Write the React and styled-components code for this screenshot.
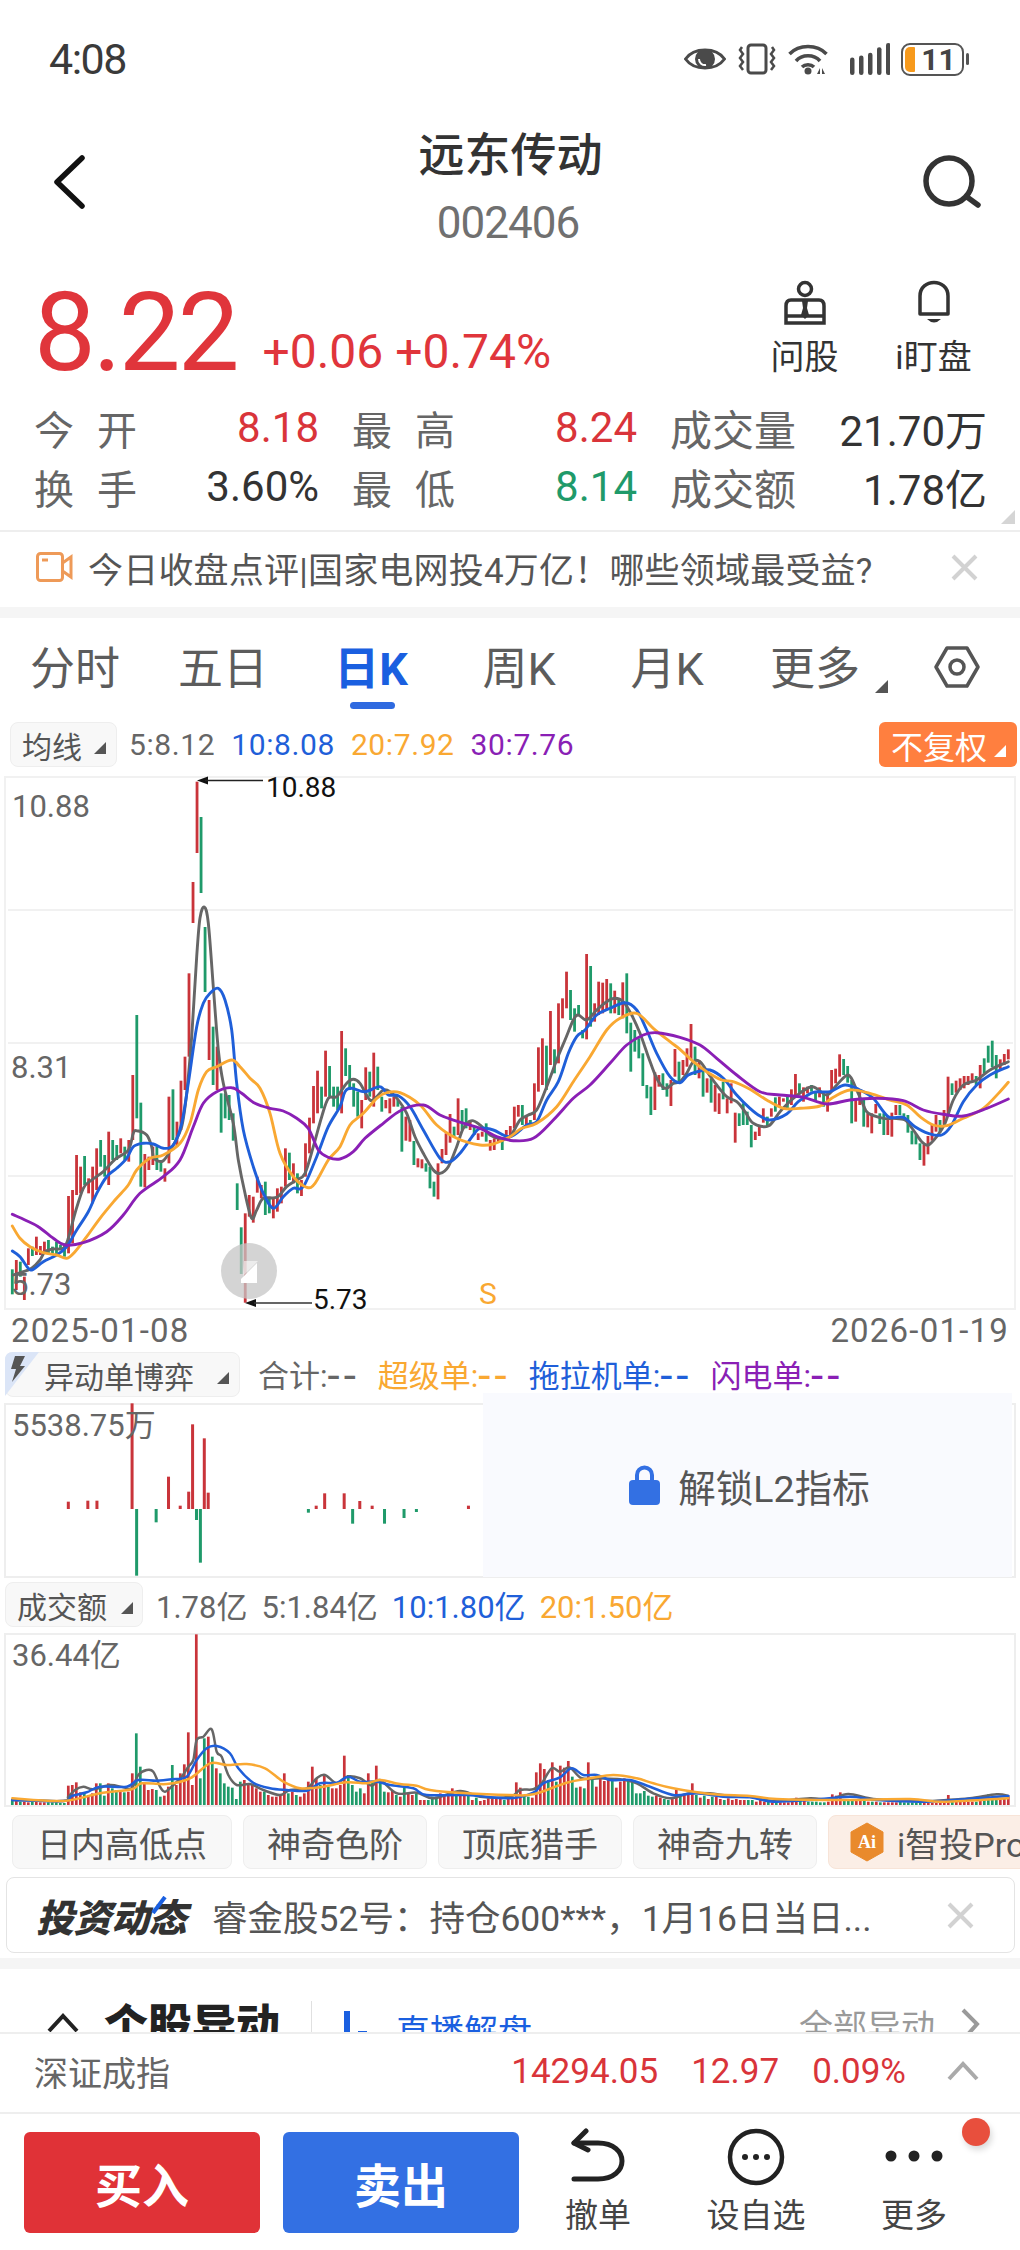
import React from 'react'
import styled, { createGlobalStyle } from 'styled-components'

const RED = '#c9343a'
const GREEN = '#1f9a6a'
const GREY = '#666666'
const BLUE = '#1f5fd9'
const ORANGE = '#f9a832'
const PURPLE = '#8a1fb5'

// candle data, read off the chart as: colour, top, bottom (3x px from the y origin)
const parseBars = (oy, s) =>
  s.trim().split(/\s+/).map((b) => {
    const [t, v] = b.slice(1).split(',').map(Number)
    return { up: b[0] === 'r', top: oy + t / 3, bottom: oy + v / 3 }
  })

const candles = [
  ...parseBars(950, `g958,1033 r930,1020 g935,980 r980,1050 r895,945 g890,918 r860,915 r888,915 r875,905 g870,910 g890,910 g875,912 g885,900 g880,920
  r738,910 r720,880 r615,735 r650,730 g618,705 r685,730 r650,760 r595,720 g570,650 g615,680 r545,705 g570,630 g585,630 r565,610 g590,630 r570,635
  r375,570 g195,505 g458,710 r612,712 r620,660 r590,645 g590,660 g630,665 r655,695 r440,640 g418,570 r515,590 r392,540 r320,420 r70,320 r-204,-81
  r-505,-291 g-399,-171 g-69,126 r150,330 g230,405 r290,420 g430,548 g430,505 g435,510 g490,572 g700,780 g832,972 r790,1058 r735,800 r740,818 r680,728
  r705,745 g695,795 g745,790 r745,805 r715,785 r710,760 r595,710 g608,690 r640,700 g670,730 r690,738 r580,680 r503,610 r408,520 r362,490 g410,475
  r302,440 g348,440 g410,470 g410,480`),
  ...parseBars(950, `r243,490 g295,378 g345,420 g400,470 g425,500 r450,535 r352,450 g365,440 r308,470 g350,420 g440,485 r450,475 r445,490 r440,470 g450,470 g470,605
  r500,572 r510,575 g573,645 r625,652 r628,655 g640,665 g650,715 g695,740 r640,748 r597,640 r550,615 r492,578 g530,560 r445,555 g480,540 g475,535 r510,540
  g530,555 r550,570 r545,560 g520,575 r570,602 r565,600 r565,575 g570,600 r540,565 r528,560 r470,535 r465,500 g465,525 r500,530 g510,525 r400,510 r292,425
  r265,405 g287,420 r183,345 g298,370 r160,340 r145,205 r65,175 g120,210 g175,245 g165,195 g240,265 r12,268 g48,230 r160,215 r95,195 r98,190 r87,180 g100,190
  r122,190 g150,195 r97,205 g70,250 g218,365 g240,305 g265,325 g310,408 g405,445 g410,495 r367,480 r375,410 g370,420 g400,440 r390,468 r297,380`),
  ...parseBars(1010, `g155,215 r150,195 r115,170 r42,150 g110,195 r150,205 g178,260 r205,248 g205,278 r225,305 r250,312 g215,268 r265,310 r220,280 r308,398 g310,348 g280,345
  g305,345 g345,412 r365,390 r345,378 r295,338 g320,350 r295,320 g262,305 r260,290 r265,275 g255,295 r238,285 r192,255 g220,250 r232,275 r230,250 g225,245
  g245,270 r232,262 g245,290 r245,305 r180,240 r176,220 r133,200 g147,195 g168,218 g210,340 r270,335 r245,285 g270,350 r310,352 r310,370 r282,310 g310,342
  g310,375 r330,375 r308,380 r285,315 g285,315 g310,328 g315,368 g362,403 g372,403 g400,450 r405,467 r378,433 r345,392 r315,365 g330,368 r300,342 r200,315
  g220,255 r212,248 r205,240 r198,235 r198,225 r190,212 g198,225 r165,235 g145,190 g107,158 g92,172 g135,205 r148,178 r132,165 r118,148`),
]

const trace = (ox, oy, s) =>
  s.trim().split(/\s+/).map((p) => {
    const [x, y] = p.split(',').map(Number)
    return [ox + x / 3, oy + y / 3]
  })

// catmull-rom through the traced points
const smooth = (pts) => {
  let d = `M${pts[0][0].toFixed(1)} ${pts[0][1].toFixed(1)}`
  for (let i = 0; i < pts.length - 1; i++) {
    const p0 = pts[i - 1] || pts[i]
    const p1 = pts[i]
    const p2 = pts[i + 1]
    const p3 = pts[i + 2] || p2
    const c1 = [p1[0] + (p2[0] - p0[0]) / 6, p1[1] + (p2[1] - p0[1]) / 6]
    const c2 = [p2[0] - (p3[0] - p1[0]) / 6, p2[1] - (p3[1] - p1[1]) / 6]
    d += `C${c1[0].toFixed(1)} ${c1[1].toFixed(1)} ${c2[0].toFixed(1)} ${c2[1].toFixed(1)} ${p2[0].toFixed(1)} ${p2[1].toFixed(1)}`
  }
  return d
}

const priceLines = [
  {
    color: GREY,
    pts: [
      ...trace(0, 950, `40,975 70,965 95,955 120,930 135,905 160,897 190,895 205,865 225,790 250,715 275,690 310,665 345,628 385,600 400,550 410,542 440,555 455,590 462,625 490,632 520,585 545,530 560,430 575,260 590,20 600,-96 613,-129 625,-81 640,111 655,300 670,400 700,520 715,630 735,730 755,805 770,780 790,745 830,742 860,710 890,690 915,670 940,590 965,500 985,445 1010,440`),
      ...trace(340, 950, `20,400 40,388 60,400 90,450 110,440 130,420 150,425 175,450 200,490 225,560 250,610 280,660 300,670 325,650 350,590 370,535 395,512 420,525 450,555 480,565 510,560 540,510 565,495 590,480 620,410 650,330 675,270 700,210 715,195 740,210 770,180 800,155 825,145 850,155 875,195 900,250 925,320 950,385 975,415 1000,400`),
      ...trace(680, 1010, `0,215 20,190 40,155 60,155 85,190 110,225 140,260 170,275 195,305 220,340 265,348 300,305 340,265 395,230 440,255 470,225 505,195 530,240 550,285 565,310 610,325 640,325 675,330 700,360 725,395 745,405 770,380 795,340 820,270 850,225 890,210 930,180 985,155`),
    ],
  },
  {
    color: BLUE,
    pts: [
      ...trace(0, 950, `37,903 60,920 85,955 100,958 130,935 170,915 200,890 230,840 265,785 290,730 320,680 350,655 380,625 400,590 430,580 460,582 490,595 520,585 545,520 565,400 590,230 610,160 630,130 655,115 675,150 695,240 710,400 730,540 760,650 790,730 820,775 850,740 880,715 910,710 950,620 985,530`),
      ...trace(340, 950, `0,470 15,425 35,415 75,425 120,410 145,435 175,437 210,470 250,540 300,625 330,635 360,610 400,555 420,535 460,540 510,560 560,525 590,515 620,450 655,395 685,310 710,260 735,240 770,195 810,175 855,158 890,180 920,240 950,310 990,380`),
      ...trace(680, 1010, `0,218 25,195 60,183 90,180 130,205 170,255 210,295 240,318 270,330 320,312 355,275 400,247 450,245 495,225 540,240 580,265 625,320 670,322 705,350 745,370 785,375 815,345 850,275 890,225 930,195 985,170`),
    ],
  },
  {
    color: ORANGE,
    pts: [
      ...trace(0, 950, `37,828 60,865 90,890 130,908 170,915 200,925 225,905 260,860 300,805 345,750 385,705 410,660 450,625 490,615 540,580 570,520 595,420 620,365 650,350 695,330 720,350 750,385 780,415 810,490 840,610 880,680 920,712 945,700 985,630`),
      ...trace(340, 950, `0,590 30,525 70,490 110,445 140,428 180,428 240,465 290,525 350,565 420,585 460,582 510,560 545,535 590,520 650,470 700,395 750,320 800,240 840,205 890,190 940,235 990,275`),
      ...trace(680, 1010, `0,118 40,155 80,185 125,210 160,215 210,238 260,270 310,295 360,295 420,288 460,262 510,240 570,250 630,270 680,285 720,320 760,345 800,347 850,325 910,295 960,245 985,217`),
    ],
  },
  {
    color: PURPLE,
    pts: [
      ...trace(0, 950, `37,793 75,810 115,830 160,865 195,885 250,878 320,845 370,795 420,730 490,680 540,630 580,530 610,460 650,425 695,413 725,430 765,460 810,475 850,483 890,505 925,535 955,600 985,622`),
      ...trace(340, 950, `0,627 40,605 75,565 130,520 185,480 250,465 300,495 345,512 420,535 470,560 520,572 580,565 640,510 700,445 750,405 810,340 860,285 910,255 950,248`),
      ...trace(680, 1010, `0,82 60,105 110,145 170,195 240,245 300,255 370,262 440,282 510,270 590,265 670,272 730,300 790,313 850,318 920,295 985,267`),
    ],
  },
]

const volumes = `g15 r12 g10 r10 r8 g10 r10 r8 r8 g8 g8 g8 g6 g6 r58 r60 r68 r38 g38 r30 r35 r65 g65 g28 r65 g50 g45 r40 g38 r40 r95 g215 g115 r65 r45 r48 g45 g25 r28 r55 g120 r60 r95 r122 r218 r60 r512 g80 g200 r205 g145 r110 g95 g65 g55 g52 g18 g70 r75 r65 r60 r50 r40 g40 r30 r25 r25 r30 r95 g35 r40 g30 r25 r35 r70 r115 r80 g60 r90 g55 r50 r50 r60 r148 g90 g60 g40 g50 r35 r95 g70 r118 g75 g40 r38 r42 g30 r25 g55 r35 r30 g35 r15 r15 g15 g25 g25 r35 r30 r30 r50 g30 r35 r30 g28 r15 g22 r12 r15 r20 r20 r20 r20 g15 r18
r25 r68 r52 g28 g25 r22 r98 r125 r108 g75 r128 g70 r118 r112 r132 g85 g52 r55 g50 r128 g75 r55 r90 r72 r75 g75 r52 r70 r80 g75 g70 g35 g35 g42 g28 g25 r28 r22 g18 g15 r20 r45 g25 r30 r30 r65 g30 r22 g28 r18 g25 r25 r18 g15 r20 r15 r18 r15 r15 g15 g15 r10 r15 r10 g10 r8 g10 r8 r8 r8 r10 r22 g12 r12 g10 g10 g10 g8 g8 r10 r32 r28 r38 g18 g15 g15 r12 r14 g16 r10 g10 r10 g8 r8 r8 r8 r8 g10 g8 g8 g8 g8 g8 r6 r6 r6 r6 r6 r6 r30 g10 r10 r12 r10 r10 r10 g10 r25 g18 g32 g20 g18 r15 r18 r25`
  .trim().split(/\s+/).map((b) => ({ up: b[0] === 'r', h: Number(b.slice(1)) / 3 }))

const volumeLines = [
  {
    color: GREY,
    pts: [
      ...trace(0, 1620, `37,540 190,543 205,530 225,510 250,500 280,508 330,495 370,502 395,505 415,465 440,450 460,455 480,500 495,515 520,495 545,470 565,440 580,420 590,360 610,350 635,328 650,395 665,410 685,465 710,495 750,492 790,510 840,525 870,510 920,505 950,475 975,465 1010,490 1040,470 1080,475 1115,497 1140,480 1190,520 1250,518 1300,535 1380,513 1440,530`),
      ...trace(510, 1620, `0,530 30,510 70,508 95,490 125,445 150,455 180,443 215,475 270,475 330,478 380,490 430,520 480,535 540,520 600,520 660,528 720,530 790,543 900,535 960,538 1015,522 1100,538 1240,543 1310,540 1380,535 1460,523 1495,528`),
    ],
  },
  {
    color: BLUE,
    pts: [
      ...trace(0, 1620, `37,540 190,543 215,528 260,517 300,500 380,500 415,480 470,482 515,478 560,470 590,420 620,385 650,378 690,400 715,445 760,488 810,505 860,510 920,512 960,490 1010,488 1045,470 1080,485 1130,485 1170,495 1240,505 1280,525 1400,525`),
      ...trace(510, 1620, `0,535 70,518 100,490 150,472 185,445 220,465 260,465 300,480 360,480 420,500 490,525 560,520 640,530 720,532 790,545 900,540 1020,530 1100,540 1240,545 1400,535 1495,528`),
    ],
  },
  {
    color: ORANGE,
    pts: [
      ...trace(0, 1620, `37,535 190,543 300,520 395,508 425,490 500,492 570,475 630,430 680,435 740,432 795,445 850,485 900,505 960,502 1040,487 1100,490 1140,480 1200,492 1250,497 1290,510 1400,520`),
      ...trace(510, 1620, `0,525 70,523 170,488 240,475 310,465 380,475 430,490 490,505 600,522 720,528 800,537 1000,540 1200,537 1300,545 1495,535`),
    ],
  },
]

const flowBars = [
  [105, 485, 507], [135, 482, 507], [149, 482, 507], [203, 190, 507], [259, 410, 507], [277, 497, 507], [290, 455, 507],
  [296, 253, 507], [314, 295, 507], [320, 458, 507], [486, 497, 507], [499, 460, 507], [529, 460, 507], [553, 483, 507],
  [572, 497, 507], [720, 497, 507], [210, 507, 707], [240, 507, 547], [302, 507, 540], [308, 507, 668], [474, 507, 518],
  [542, 507, 551], [591, 507, 551], [621, 507, 534], [640, 507, 516],
]

const barX = (i, n) => 12.3 + (996 / (n - 1)) * i

const GlobalStyle = createGlobalStyle`
  html, body { margin: 0; padding: 0; background: #fff; }
  body { font-family: Roboto, "Noto Sans CJK SC", sans-serif; color: #333; }
  * { box-sizing: border-box; }
`

const Page = styled.div`
  width: 1020px;
  height: 2250px;
  overflow: hidden;
  background: #fff;
  display: flex;
  flex-direction: column;
`

const StatusBar = styled.div`
  height: 120px;
  flex: none;
  display: flex;
  align-items: center;
  justify-content: space-between;
  padding: 0 56px 2px 49px;
  font-size: 43px;
  letter-spacing: -1.5px;
  color: #3a3a3a;
`
const StatusIcons = styled.div`
  display: flex;
  align-items: center;
  letter-spacing: 0;
`
const Battery = styled.div`
  position: relative;
  width: 63px;
  height: 33px;
  margin-left: 11px;
  border: 2.5px solid #555;
  border-radius: 9px;
  display: flex;
  align-items: center;
  justify-content: center;
  font-size: 30px;
  font-weight: 700;
  color: #444;
  padding-left: 12px;
  &::before {
    content: '';
    position: absolute;
    left: 2px;
    top: 2px;
    bottom: 2px;
    width: 10px;
    background: #f79a1c;
    border-radius: 5px 1px 1px 5px;
  }
  &::after {
    content: '';
    position: absolute;
    right: -7px;
    top: 8px;
    width: 3px;
    height: 12px;
    background: #555;
    border-radius: 2px;
  }
`

const Header = styled.div`
  height: 150px;
  flex: none;
  display: flex;
  align-items: flex-start;
  justify-content: space-between;
  padding: 35px 39px 0 53px;
`
const TitleBox = styled.div`
  display: flex;
  flex-direction: column;
  align-items: center;
  margin-left: 13px;
  margin-top: -33px;
`
const Title = styled.div`
  font-size: 46px;
  font-weight: 500;
  line-height: 66px;
  color: #333;
`
const Code = styled.div`
  font-size: 44px;
  letter-spacing: -1px;
  line-height: 50px;
  margin: 10px 5px 0 0;
  color: #707070;
`

const PriceRow = styled.div`
  height: 127px;
  flex: none;
  display: flex;
  justify-content: space-between;
  padding: 0 22px 0 34px;
`
const PriceLeft = styled.div`
  display: flex;
  align-items: flex-start;
  gap: 26px;
`
const Price = styled.div`
  font-size: 110px;
  line-height: 110px;
  margin-top: 8px;
  letter-spacing: -3px;
  color: #e0353b;
`
const Change = styled.div`
  font-size: 48px;
  line-height: 56px;
  margin-top: 54px;
  color: #e0353b;
  white-space: pre;
`
const Actions = styled.div`
  display: flex;
  padding-top: 10px;
`
const Action = styled.div`
  width: 129px;
  display: flex;
  flex-direction: column;
  align-items: center;
  gap: 8px;
  font-size: 34px;
  line-height: 46px;
  color: #333;
`

const Stats = styled.div`
  height: 133px;
  flex: none;
  padding: 1px 33px 0 34px;
  position: relative;
`
const StatRow = styled.div`
  display: flex;
  height: 59px;
  align-items: center;
  gap: 33px;
`
const StatCell = styled.div`
  display: flex;
  align-items: center;
  justify-content: space-between;
  width: ${(p) => p.$w}px;
`
const StatLabel = styled.div`
  display: flex;
  justify-content: space-between;
  font-size: ${(p) => (p.$long ? 42 : 40)}px;
  width: ${(p) => (p.$long ? 126 : 103)}px;
  color: #666;
`
const StatValue = styled.div`
  font-size: 42px;
  color: ${(p) => p.$color || '#333'};
`
const CornerMark = styled.div`
  position: absolute;
  right: 5px;
  bottom: 6px;
  width: 0;
  height: 0;
  border-left: 14px solid transparent;
  border-bottom: 14px solid #d5d5d5;
`

const Notice = styled.div`
  height: 77px;
  flex: none;
  border-top: 2px solid #eeeeee;
  display: flex;
  align-items: center;
  padding: 0 42px 5px 36px;
  font-size: 35px;
  color: #555;
`
const NoticeText = styled.div`
  flex: 1;
  margin-left: 15px;
  white-space: nowrap;
  letter-spacing: 0.2px;
`
const Band = styled.div`
  height: ${(p) => p.$h}px;
  flex: none;
  background: #f5f5f5;
`

const Tabs = styled.div`
  height: 94px;
  flex: none;
  display: flex;
  padding-left: 1px;
  padding-top: 11px;
`
const Tab = styled.div`
  position: relative;
  width: 148px;
  height: 72px;
  display: flex;
  align-items: center;
  justify-content: center;
  font-size: 45px;
  font-weight: ${(p) => (p.$active ? 700 : 400)};
  color: ${(p) => (p.$active ? '#1a5fe0' : '#5c5c5c')};
  ${(p) =>
    p.$active &&
    `&::after {
      content: '';
      position: absolute;
      left: 53px;
      right: 50px;
      bottom: -8px;
      height: 7px;
      border-radius: 4px;
      background: #2f6ae0;
    }`}
`
const TabCaret = styled.div`
  align-self: flex-end;
  margin: 0 0 19px -14px;
  width: 0;
  height: 0;
  border-left: 13px solid transparent;
  border-bottom: 13px solid #555;
`
const TabIcon = styled.div`
  margin: 14px 0 0 46px;
`

const LegendRow = styled.div`
  height: 64px;
  flex: none;
  padding: 10px 3px 0 10px;
  display: flex;
  align-items: flex-start;
`
const Selector = styled.div`
  position: relative;
  flex: none;
  height: 45px;
  width: ${(p) => p.$w}px;
  padding-left: ${(p) => p.$pad || 11}px;
  background: #f8f8f8;
  border: 1px solid #eee;
  border-radius: 8px;
  display: flex;
  align-items: center;
  font-size: 30px;
  color: #555;
  &::after {
    content: '';
    position: absolute;
    right: ${(p) => p.$caret || 10}px;
    bottom: 12px;
    width: 0;
    height: 0;
    border-left: 12px solid transparent;
    border-bottom: 12px solid #555;
  }
`
const LegendItems = styled.div`
  height: 45px;
  display: flex;
  align-items: center;
  gap: 16px;
  margin-left: 12px;
  font-size: 30px;
  letter-spacing: 0.6px;
  flex: 1;
`
const LegendItem = styled.span`
  color: ${(p) => p.$color || '#666'};
  white-space: nowrap;
`
const AdjustButton = styled.div`
  position: relative;
  width: 138px;
  height: 45px;
  background: #ff7f3f;
  border-radius: 6px;
  color: #fff;
  font-size: 32px;
  display: flex;
  align-items: center;
  padding-left: 12px;
  &::after {
    content: '';
    position: absolute;
    right: 11px;
    bottom: 10px;
    width: 0;
    height: 0;
    border-left: 12px solid transparent;
    border-bottom: 12px solid #fff;
  }
`

const ChartBox = styled.div`
  height: ${(p) => p.$h}px;
  flex: none;
  position: relative;
  svg { display: block; overflow: visible; }
`

const DateRow = styled.div`
  height: 40px;
  flex: none;
  display: flex;
  justify-content: space-between;
  align-items: center;
  padding: 0 11px;
  font-size: 33px;
  letter-spacing: 1.2px;
  color: #666;
`

const IndicatorRow = styled.div`
  height: ${(p) => p.$h}px;
  flex: none;
  display: flex;
  align-items: flex-start;
  padding: ${(p) => p.$top}px 0 0 5px;
`
const Flash = styled.svg`
  position: absolute;
  left: -1px;
  top: -1px;
`
const IndicatorItems = styled.div`
  height: 45px;
  display: flex;
  align-items: center;
  font-size: 31px;
  gap: ${(p) => p.$gap}px;
  margin-left: ${(p) => p.$ml}px;
`
const Dashes = styled.span`
  font-size: 44px;
  line-height: 1;
  letter-spacing: 4px;
  vertical-align: -4px;
`

const Locked = styled.div`
  position: absolute;
  left: 483px;
  right: 8px;
  top: -5px;
  bottom: 0;
  background: #f9fafe;
  display: flex;
  align-items: center;
  justify-content: center;
  gap: 18px;
  padding-left: 4px;
  font-size: 37.5px;
  color: #555;
`

const ChipRow = styled.div`
  height: 71px;
  flex: none;
  padding: 9px 0 0 12px;
  display: flex;
  gap: 11px;
  overflow: hidden;
`
const Chip = styled.div`
  flex: none;
  height: 54px;
  padding: 0 ${(p) => p.$pad || 23}px;
  display: flex;
  align-items: center;
  gap: 12px;
  font-size: 34px;
  white-space: nowrap;
  color: #555;
  border-radius: 8px;
  border: 1px solid ${(p) => (p.$hot ? '#f7e4d8' : '#eee')};
  background: ${(p) => (p.$hot ? '#fbeee6' : '#f8f8f8')};
`

const NewsCard = styled.div`
  height: 76px;
  flex: none;
  margin: 0 5px 0 6px;
  border: 1px solid #e4e4e4;
  border-radius: 8px;
  display: flex;
  align-items: center;
  padding: 0 40px 0 29px;
`
const NewsBrand = styled.div`
  position: relative;
  font-size: 38px;
  font-weight: 900;
  font-style: italic;
  color: #333;
  letter-spacing: -0.5px;
  white-space: nowrap;
`
const BrandStroke = styled.svg`
  position: absolute;
  left: 115px;
  top: 8px;
`
const NewsText = styled.div`
  flex: 1;
  margin-left: 26px;
  font-size: 35.5px;
  color: #555;
  white-space: nowrap;
`

const Peek = styled.div`
  height: 63px;
  flex: none;
  overflow: hidden;
  display: flex;
  align-items: flex-start;
  padding: 27px 40px 0 47px;
`
const PeekTitle = styled.div`
  font-size: 44px;
  font-weight: 900;
  color: #222;
  line-height: 60px;
  margin-left: 25px;
`
const PeekDivider = styled.div`
  width: 1px;
  height: 40px;
  margin: 5px 32px 0 31px;
  background: #e0e0e0;
`
const PeekLink = styled.div`
  flex: 1;
  display: flex;
  gap: 29px;
  font-size: 34px;
  line-height: 46px;
  padding-top: 13px;
  color: #1a5fe0;
`
const PeekLinkMark = styled.div`
  width: 23px;
  height: 60px;
  margin-top: 2px;
  border-left: 6px solid #1a5fe0;
  position: relative;
  &::after {
    content: '';
    position: absolute;
    left: 8px;
    top: 20px;
    width: 9px;
    height: 6px;
    background: #1a5fe0;
  }
`
const PeekMore = styled.div`
  display: flex;
  gap: 26px;
  font-size: 34px;
  line-height: 46px;
  color: #9a9a9a;
  padding-top: 8px;
`

const IndexRow = styled.div`
  height: 82px;
  flex: none;
  border-top: 2px solid #eee;
  border-bottom: 2px solid #eee;
  display: flex;
  align-items: center;
  padding: 0 41px 4px 34px;
  font-size: 34px;
  color: #666;
`
const IndexName = styled.div`
  flex: 1;
`
const IndexValue = styled.div`
  font-size: 35px;
  color: #d9343a;
  margin-right: ${(p) => p.$mr}px;
`

const TradeBar = styled.div`
  flex: 1;
  position: relative;
  display: flex;
  padding: 18px 0 0 24px;
`
const TradeButton = styled.div`
  width: 236px;
  height: 101px;
  margin-right: ${(p) => p.$mr}px;
  border-radius: 6px;
  background: ${(p) => p.$color};
  color: #fff;
  font-size: 47px;
  font-weight: 700;
  display: flex;
  align-items: center;
  justify-content: center;
`
const TradeTool = styled.div`
  width: 158px;
  height: 108px;
  margin-top: -4px;
  display: flex;
  flex-direction: column;
  align-items: center;
  justify-content: space-between;
  font-size: 33px;
  line-height: 40px;
  color: #444;
`
const RedDot = styled.div`
  position: absolute;
  left: 962px;
  top: 4px;
  width: 28px;
  height: 28px;
  border-radius: 50%;
  background: #e84f3d;
  box-shadow: 2px 4px 6px rgba(0, 0, 0, 0.15);
`

function Cross({ size = 27, color = '#d2d2d2' }) {
  return (
    <svg width={size} height={size} viewBox="0 0 27 27" fill="none" stroke={color} strokeWidth="4">
      <path d="M2 2 L25 25 M25 2 L2 25" />
    </svg>
  )
}

function StatusIconSet() {
  const bars = [[849, 25], [858, 28], [867, 32], [876, 40], [885, 46]]
  return (
    <StatusIcons>
      <svg width="42" height="26" viewBox="0 0 42 26">
        <path d="M1.5 13 C10 1 32 1 40.500 13 C32 25 10 25 1.500 13 Z" fill="none" stroke="#4a4a4a" strokeWidth="3" />
        <circle cx="21" cy="13" r="10" fill="#4a4a4a" />
        <path d="M15 13 A6 6 0 0 0 22 19" stroke="#fff" strokeWidth="2" fill="none" />
      </svg>
      <svg width="38" height="32" viewBox="0 0 38 32" style={{ marginLeft: 12 }}>
        <rect x="10" y="2" width="18" height="28" rx="3" fill="none" stroke="#4a4a4a" strokeWidth="3" />
        <path d="M4 4 l-2 3 l3 4 l-3 4 l3 4 l-3 4 l3 4" fill="none" stroke="#4a4a4a" strokeWidth="2.500" />
        <path d="M34 4 l2 3 l-3 4 l3 4 l-3 4 l3 4 l-3 4" fill="none" stroke="#4a4a4a" strokeWidth="2.500" />
      </svg>
      <svg width="42" height="32" viewBox="0 0 42 32" style={{ marginLeft: 12 }}>
        <path d="M1.500 11 C11 1 29 1 38.500 11" fill="none" stroke="#4a4a4a" strokeWidth="3.500" />
        <path d="M8 18 C14 11 26 11 32 18" fill="none" stroke="#4a4a4a" strokeWidth="3.500" />
        <path d="M14 24 C17 21 23 21 26 24" fill="none" stroke="#4a4a4a" strokeWidth="3.500" />
        <circle cx="20" cy="28" r="3.500" fill="#4a4a4a" />
        <path d="M29 31 l3 -6 v6 z M34 25 l3 6 h-3 z" fill="#4a4a4a" />
      </svg>
      <svg width="42" height="32" viewBox="0 0 42 32" style={{ marginLeft: 18 }}>
        {bars.map(([x, h]) => (
          <rect key={x} x={x - 847} y={32 - (h * 32) / 46} width="4.500" height={(h * 32) / 46} rx="2.200" fill="#4a4a4a" />
        ))}
      </svg>
      <Battery>11</Battery>
    </StatusIcons>
  )
}

function ChartLines({ lines, width }) {
  return lines.map((l) => (
    <path key={l.color} d={smooth(l.pts)} fill="none" stroke={l.color} strokeWidth={width} strokeLinejoin="round" strokeLinecap="round" />
  ))
}

function PriceChart() {
  const gridY = [910, 1043, 1176]
  return (
    <svg width="1020" height="534" viewBox="0 776 1020 534" fontFamily="Roboto, sans-serif">
      <rect x="5" y="777" width="1010" height="532" fill="none" stroke="#f1f1f1" strokeWidth="2" />
      {gridY.map((y) => (
        <line key={y} x1="8" x2="1013" y1={y} y2={y} stroke="#ececec" strokeWidth="1.500" />
      ))}
      {candles.map((c, i) => (
        <rect key={i} x={barX(i, candles.length) - 1.4} y={c.top} width="2.800" height={c.bottom - c.top} fill={c.up ? RED : GREEN} />
      ))}
      <ChartLines lines={priceLines} width={2.900} />
      <text x="12" y="817" fontSize="31" fill="#666">10.88</text>
      <text x="11" y="1078" fontSize="31" fill="#666">8.31</text>
      <text x="11" y="1295" fontSize="31" fill="#666">5.73</text>
      <path d="M197 780.500 L208 776.500 V784.500 Z" fill="#111" />
      <line x1="205" x2="263" y1="780.500" y2="780.500" stroke="#222" strokeWidth="1.500" />
      <text x="266" y="797" fontSize="28" fill="#111">10.88</text>
      <circle cx="249" cy="1271" r="28" fill="rgba(198,198,198,0.75)" />
      <path d="M241 1279 L257 1263 V1283 H241 Z" fill="#fff" />
      <path d="M244 1261 L258 1261 L243 1276 Z" fill="#fff" opacity="0.55" />
      <path d="M245 1303 L256 1299 V1307 Z" fill="#111" />
      <line x1="254" x2="312" y1="1303" y2="1303" stroke="#333" strokeWidth="1.500" />
      <text x="313" y="1309" fontSize="28" fill="#111">5.73</text>
      <text x="479" y="1304" fontSize="30" fill="#f9a832">S</text>
    </svg>
  )
}

function FlowChart() {
  return (
    <svg width="1020" height="179" viewBox="0 1398 1020 179" fontFamily="Roboto, 'Noto Sans CJK SC', sans-serif">
      <rect x="5" y="1404" width="1010" height="173" fill="none" stroke="#eeeeee" strokeWidth="2" />
      {flowBars.map(([x, top, bottom], i) => (
        <rect key={i} x={x / 1.537 - 1.500} y={1340 + top / 3} width="3" height={(bottom - top) / 3} fill={bottom === 507 ? RED : GREEN} />
      ))}
      <text x="12" y="1436" fontSize="31" fill="#666">5538.75万</text>
    </svg>
  )
}

function VolumeChart() {
  return (
    <svg width="1020" height="173" viewBox="0 1633 1020 173" fontFamily="Roboto, 'Noto Sans CJK SC', sans-serif">
      <rect x="5" y="1634" width="1010" height="172" fill="none" stroke="#eeeeee" strokeWidth="2" />
      {volumes.map((v, i) => (
        <rect key={i} x={barX(i, volumes.length) - 1.350} y={1805 - v.h} width="2.700" height={v.h} fill={v.up ? RED : GREEN} />
      ))}
      <ChartLines lines={volumeLines} width={2.500} />
      <text x="12" y="1666" fontSize="31" fill="#666">36.44亿</text>
    </svg>
  )
}

export default function App() {
  return (
    <Page>
      <GlobalStyle />
      <StatusBar>
        <span>4:08</span>
        <StatusIconSet />
      </StatusBar>

      <Header>
        <svg width="32" height="54" viewBox="0 0 32 54" fill="none" stroke="#111" strokeWidth="5.500" strokeLinecap="round" strokeLinejoin="round">
          <path d="M29 3 L4 27 L29 51" />
        </svg>
        <TitleBox>
          <Title>远东传动</Title>
          <Code>002406</Code>
        </TitleBox>
        <svg width="58" height="54" viewBox="0 0 58 54" fill="none" stroke="#333" strokeWidth="5.500" strokeLinecap="round">
          <circle cx="26" cy="26" r="23" />
          <path d="M44 42 L55 50" />
        </svg>
      </Header>

      <PriceRow>
        <PriceLeft>
          <Price>8.22</Price>
          <Change>+0.06 +0.74%</Change>
        </PriceLeft>
        <Actions>
          <Action>
            <svg width="44" height="46" viewBox="0 0 44 46" fill="none" stroke="#333" strokeWidth="3.500">
              <circle cx="22" cy="9" r="6.500" />
              <path d="M8 20 H36 Q41 20 41 26 V43 H3 V26 Q3 20 8 20 Z" />
              <path d="M3 36 H41" />
              <path d="M19 21 H25 L24 28 L26 35 L22 39 L18 35 L20 28 Z" fill="#333" stroke="none" />
            </svg>
            问股
          </Action>
          <Action>
            <svg width="36" height="46" viewBox="0 0 36 46" fill="none" stroke="#333" strokeWidth="3.500">
              <path d="M4 34 V16 C4 -2 32 -2 32 16 V34 Z" strokeLinejoin="round" />
              <path d="M11 39 Q18 46 25 39 Z" fill="#333" stroke="none" />
            </svg>
            i盯盘
          </Action>
        </Actions>
      </PriceRow>

      <Stats>
        <StatRow>
          <StatCell $w={285}>
            <StatLabel><span>今</span><span>开</span></StatLabel>
            <StatValue $color="#d9343a">8.18</StatValue>
          </StatCell>
          <StatCell $w={285}>
            <StatLabel><span>最</span><span>高</span></StatLabel>
            <StatValue $color="#d9343a">8.24</StatValue>
          </StatCell>
          <StatCell $w={317}>
            <StatLabel $long>成交量</StatLabel>
            <StatValue>21.70万</StatValue>
          </StatCell>
        </StatRow>
        <StatRow>
          <StatCell $w={285}>
            <StatLabel><span>换</span><span>手</span></StatLabel>
            <StatValue>3.60%</StatValue>
          </StatCell>
          <StatCell $w={285}>
            <StatLabel><span>最</span><span>低</span></StatLabel>
            <StatValue $color={GREEN}>8.14</StatValue>
          </StatCell>
          <StatCell $w={317}>
            <StatLabel $long>成交额</StatLabel>
            <StatValue>1.78亿</StatValue>
          </StatCell>
        </StatRow>
        <CornerMark />
      </Stats>

      <Notice>
        <svg width="37" height="30" viewBox="0 0 37 30" fill="none" stroke="#ee9a58" strokeWidth="3">
          <rect x="1.500" y="1.500" width="25" height="27" rx="3" />
          <path d="M26.500 11 L35 5 V25 L26.500 19" />
          <path d="M6 8 H12" />
        </svg>
        <NoticeText>今日收盘点评|国家电网投4万亿！哪些领域最受益?</NoticeText>
        <Cross />
      </Notice>
      <Band $h={11} />

      <Tabs>
        <Tab>分时</Tab>
        <Tab>五日</Tab>
        <Tab $active>日K</Tab>
        <Tab>周K</Tab>
        <Tab>月K</Tab>
        <Tab>更多</Tab>
        <TabCaret />
        <TabIcon>
          <svg width="46" height="48" viewBox="0 0 46 48" fill="none" stroke="#555" strokeWidth="3.500" strokeLinejoin="round">
            <path d="M13 5 H33 L44 24 L33 43 H13 L2 24 Z" />
            <circle cx="23" cy="24" r="7" />
          </svg>
        </TabIcon>
      </Tabs>

      <LegendRow>
        <Selector $w={107}>均线</Selector>
        <LegendItems>
          <LegendItem>5:8.12</LegendItem>
          <LegendItem $color={BLUE}>10:8.08</LegendItem>
          <LegendItem $color={ORANGE}>20:7.92</LegendItem>
          <LegendItem $color={PURPLE}>30:7.76</LegendItem>
        </LegendItems>
        <AdjustButton>不复权</AdjustButton>
      </LegendRow>

      <ChartBox $h={534}>
        <PriceChart />
      </ChartBox>

      <DateRow>
        <span>2025-01-08</span>
        <span>2026-01-19</span>
      </DateRow>

      <IndicatorRow $h={48} $top={2}>
        <Selector $w={235} $pad={38}>
          <Flash width="34" height="44" viewBox="0 0 34 44">
            <path d="M8 0 H34 L0 44 V8 Q0 0 8 0 Z" fill="#dbe5f7" />
            <path d="M10 4 H20 L15 14 H20 L7 30 L11 17 H6 Z" fill="#555" />
          </Flash>
          异动单博弈
        </Selector>
        <IndicatorItems $gap={18} $ml={18}>
          <LegendItem>合计:<Dashes>--</Dashes></LegendItem>
          <LegendItem $color={ORANGE}>超级单:<Dashes>--</Dashes></LegendItem>
          <LegendItem $color={BLUE}>拖拉机单:<Dashes>--</Dashes></LegendItem>
          <LegendItem $color={PURPLE}>闪电单:<Dashes>--</Dashes></LegendItem>
        </IndicatorItems>
      </IndicatorRow>

      <ChartBox $h={179}>
        <FlowChart />
        <Locked>
          <svg width="31" height="40" viewBox="0 0 31 40">
            <path d="M8 18 V10 A7.500 7.500 0 0 1 23 10 V18" fill="none" stroke="#3370e3" strokeWidth="4" />
            <rect x="0" y="15" width="31" height="25" rx="4" fill="#3370e3" />
          </svg>
          解锁L2指标
        </Locked>
      </ChartBox>

      <IndicatorRow $h={56} $top={5}>
        <Selector $w={138} $caret={9}>成交额</Selector>
        <IndicatorItems $gap={14} $ml={13}>
          <LegendItem>1.78亿</LegendItem>
          <LegendItem>5:1.84亿</LegendItem>
          <LegendItem $color={BLUE}>10:1.80亿</LegendItem>
          <LegendItem $color={ORANGE}>20:1.50亿</LegendItem>
        </IndicatorItems>
      </IndicatorRow>

      <ChartBox $h={173}>
        <VolumeChart />
      </ChartBox>

      <ChipRow>
        <Chip $pad={24}>日内高低点</Chip>
        <Chip>神奇色阶</Chip>
        <Chip>顶底猎手</Chip>
        <Chip>神奇九转</Chip>
        <Chip $hot $pad={20}>
          <svg width="36" height="40" viewBox="0 0 36 40">
            <path d="M18 1 L34 10 V30 L18 39 L2 30 V10 Z" fill="#e98a2c" stroke="#e98a2c" strokeLinejoin="round" />
            <text x="18" y="26" textAnchor="middle" fontSize="18" fontFamily="Liberation Serif, serif" fontWeight="700" fill="#fff">Ai</text>
          </svg>
          i智投Pro
        </Chip>
      </ChipRow>

      <NewsCard>
        <NewsBrand>
          投资动态
          <BrandStroke width="16" height="18" viewBox="0 0 16 18">
            <path d="M14 1 L2 17" stroke="#1a5fe0" strokeWidth="4" />
          </BrandStroke>
        </NewsBrand>
        <NewsText>睿金股52号：持仓600***，1月16日当日...</NewsText>
        <Cross />
      </NewsCard>
      <div style={{ height: 5, flex: 'none' }} />
      <Band $h={11} />

      <Peek>
        <svg width="32" height="20" viewBox="0 0 32 20" fill="none" stroke="#222" strokeWidth="4" style={{ marginTop: 17, flex: 'none' }}>
          <path d="M2 18 L16 3 L30 18" />
        </svg>
        <PeekTitle>个股异动</PeekTitle>
        <PeekDivider />
        <PeekLink>
          <PeekLinkMark />
          直播解盘
        </PeekLink>
        <PeekMore>
          全部异动
          <svg width="19" height="40" viewBox="0 0 19 40" fill="none" stroke="#9a9a9a" strokeWidth="4" style={{ marginTop: 4 }}>
            <path d="M2 2 L16 16 L2 32" />
          </svg>
        </PeekMore>
      </Peek>

      <IndexRow>
        <IndexName>深证成指</IndexName>
        <IndexValue $mr={33}>14294.05</IndexValue>
        <IndexValue $mr={33}>12.97</IndexValue>
        <IndexValue $mr={41}>0.09%</IndexValue>
        <svg width="32" height="20" viewBox="0 0 32 20" fill="none" stroke="#aaa" strokeWidth="4">
          <path d="M2 18 L16 3 L30 18" />
        </svg>
      </IndexRow>

      <TradeBar>
        <TradeButton $color="#e03237" $mr={23}>买入</TradeButton>
        <TradeButton $color="#3370e3" $mr={0}>卖出</TradeButton>
        <TradeTool>
          <svg width="56" height="54" viewBox="0 0 56 54" fill="none" stroke="#222" strokeWidth="5" strokeLinecap="round" strokeLinejoin="round">
            <path d="M16 3 L4 15 L18 22" />
            <path d="M4 15 H28 C60 15 60 51 28 51 H4" />
          </svg>
          撤单
        </TradeTool>
        <TradeTool>
          <svg width="58" height="58" viewBox="0 0 58 58" fill="none">
            <circle cx="29" cy="29" r="26" stroke="#222" strokeWidth="4.500" />
            <circle cx="18" cy="29" r="3" fill="#222" />
            <circle cx="29" cy="29" r="3" fill="#222" />
            <circle cx="40" cy="29" r="3" fill="#222" />
          </svg>
          设自选
        </TradeTool>
        <TradeTool>
          <svg width="58" height="56" viewBox="0 0 58 56">
            <circle cx="6" cy="28" r="5.500" fill="#222" />
            <circle cx="29" cy="28" r="5.500" fill="#222" />
            <circle cx="52" cy="28" r="5.500" fill="#222" />
          </svg>
          更多
        </TradeTool>
        <RedDot />
      </TradeBar>
    </Page>
  )
}
